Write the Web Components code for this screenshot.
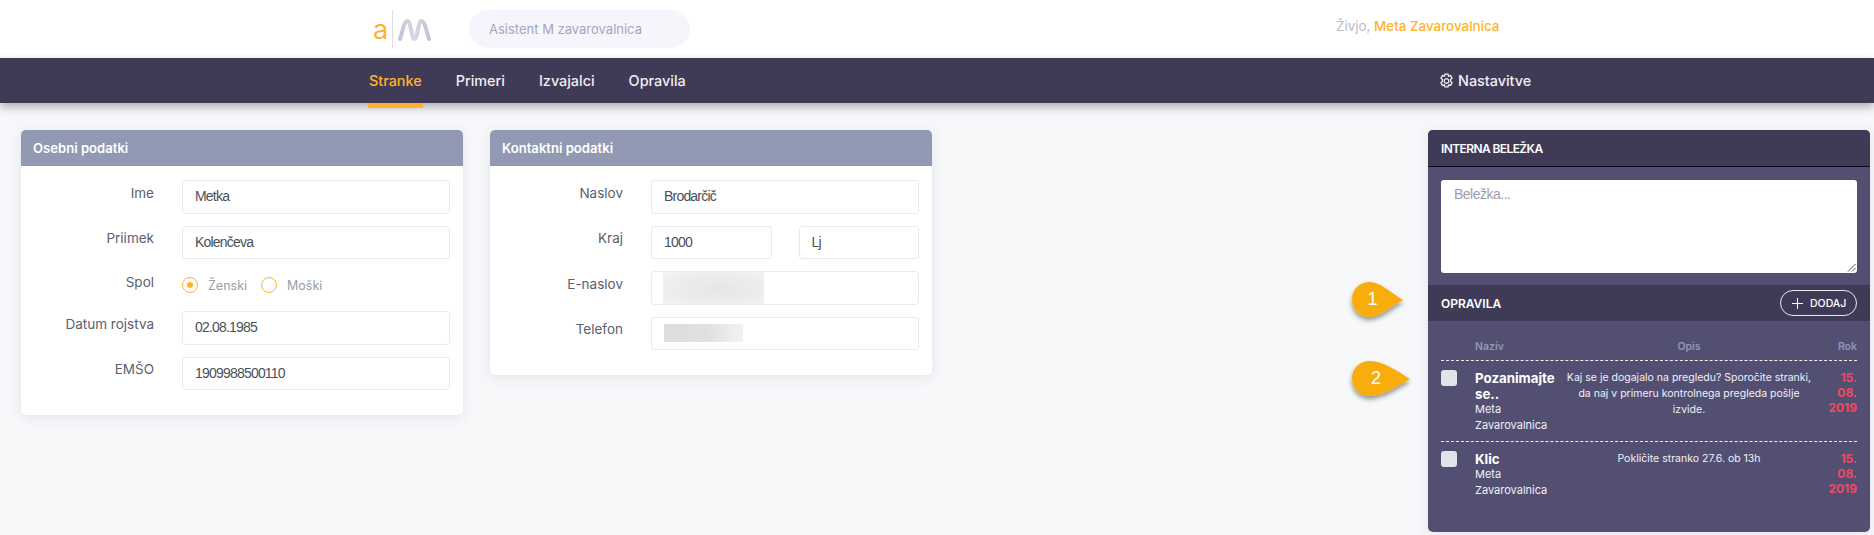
<!DOCTYPE html>
<html lang="sl">
<head>
<meta charset="utf-8">
<title>Stranke</title>
<style>
html, body { margin: 0; height: 100%; }
body {
  background: #f7f8fa;
  font-family: "Inter", "Liberation Sans", sans-serif;
  --dark: #3f3b57;
  --violet: #524f72;
  --orange: #ffb22e;
  overflow: hidden;
}
</style>
</head>
<body>
<top-bar></top-bar>
<main-nav></main-nav>
<page-body>
  <form-card title="Osebni podatki">
    <form-row label="Ime"><text-field>Metka</text-field></form-row>
    <form-row label="Priimek"><text-field>Kolenčeva</text-field></form-row>
    <form-row label="Spol" short>
      <radio-option checked>Ženski</radio-option>
      <radio-option>Moški</radio-option>
    </form-row>
    <form-row label="Datum rojstva"><text-field>02.08.1985</text-field></form-row>
    <form-row label="EMŠO"><text-field>1909988500110</text-field></form-row>
  </form-card>
  <form-card title="Kontaktni podatki">
    <form-row label="Naslov"><text-field>Brodarčič</text-field></form-row>
    <form-row label="Kraj" split><text-field>1000</text-field><text-field>Lj</text-field></form-row>
    <form-row label="E-naslov"><text-field><blur-patch kind="mail"></blur-patch></text-field></form-row>
    <form-row label="Telefon"><text-field><blur-patch kind="phone"></blur-patch></text-field></form-row>
  </form-card>
  <side-panel>
    <task-row name="Pozanimajte se.." owner="Meta Zavarovalnica" date="15. 08. 2019">Kaj se je dogajalo na pregledu? Sporočite stranki, da naj v primeru kontrolnega pregleda pošlje izvide.</task-row>
    <task-row name="Klic" owner="Meta Zavarovalnica" date="15. 08. 2019">Pokličite stranko 27.6. ob 13h</task-row>
  </side-panel>
  <call-out num="1" tip="51" style="left:1352px;top:179px"></call-out>
  <call-out num="2" tip="58" style="left:1352px;top:258px"></call-out>
</page-body>

<script>
function define(name, css, html, init) {
  customElements.define(name, class extends HTMLElement {
    constructor() {
      super();
      this.attachShadow({ mode: "open" }).innerHTML = `<style>${css}</style>${html}`;
    }
    connectedCallback() {
      if (init) init(this, this.shadowRoot);
    }
  });
}

define("top-bar", `
:host { display: flex; align-items: center; height: 58px; background: #fff; padding-left: 369px; box-sizing: border-box; }
.logo { display: flex; align-items: center; width: 100px; height: 38px; }
.a { font: 400 27px "Inter", sans-serif; color: var(--orange); width: 23px; line-height: 38px; padding-left: 4px; box-sizing: border-box; margin-top: 2px; }
.sep { width: 1px; height: 38px; background: #dcdce4; }
svg { margin-left: 4px; margin-top: 2px; }
.search { width: 221px; height: 38px; border-radius: 19px; background: #f5f5fb; color: #a4a7bf; font-size: 13px; line-height: 38px; padding-left: 20px; box-sizing: border-box; }
.hello { position: absolute; left: 1336px; top: 18px; font-size: 13.4px; line-height: 16px; color: #b9bac9; }
.hello b { font-weight: 500; color: var(--orange); }
`, `
<div class="logo">
  <span class="a">a</span><span class="sep"></span>
  <svg width="35" height="24" viewBox="0 0 35 24"><defs><linearGradient id="w" x1="0" x2="1" y1="0" y2="0"><stop offset="0" stop-color="#c4c6d9"/><stop offset=".5" stop-color="#d6d7e4"/><stop offset="1" stop-color="#c4c6d9"/></linearGradient></defs><path d="M3 21C5.5 14 7 3 10.5 3 14 3 14.5 21 17.5 21 20.5 21 21 3 24.5 3 28 3 29.5 14 32 21" fill="none" stroke="url(#w)" stroke-width="4" stroke-linecap="round"/></svg>
</div>
<div class="search">Asistent M zavarovalnica</div>
<div class="hello">Živjo, <b>Meta Zavarovalnica</b></div>
`);

define("main-nav", `
:host { display: flex; position: relative; height: 45px; background: var(--dark); padding-left: 368px; box-shadow: 0 4px 9px rgba(60,60,70,.4); z-index: 1; }
a { display: block; color: #eeeef4; font-size: 14.4px; font-weight: 500; line-height: 45px; padding: 0 1px; margin-right: 32px; position: relative; }
a.on { color: var(--orange); }
a.on::after { content: ""; position: absolute; left: 0; right: 0; top: 45px; height: 5px; background: var(--orange); }
.set { position: absolute; left: 1438px; top: 0; display: flex; align-items: center; gap: 4px; margin: 0; }
`, `
<a class="on">Stranke</a><a>Primeri</a><a>Izvajalci</a><a>Opravila</a>
<a class="set">
  <svg width="15" height="16" viewBox="0 0 14 15" fill="none" stroke="#eeeef4" stroke-width="1.2"><path d="M5.6 1h2.8l.5 2 1.9-.6 1.4 2.4-1.4 1.4v1.6l1.4 1.4-1.4 2.4-1.9-.6-.5 2H5.6l-.5-2-1.9.6-1.4-2.4 1.4-1.4V6.2L1.8 4.8l1.4-2.4 1.9.6z"/><path d="M7 5.2l2 1.15v2.3L7 9.8l-2-1.15v-2.3z"/></svg>
  Nastavitve
</a>
`);

define("page-body", `
:host { display: flex; position: relative; align-items: flex-start; gap: 27px; padding: 27px 4px 0 21px; }
::slotted(side-panel) { margin-left: auto; }
`, `<slot></slot>`);

define("form-card", `
:host { display: block; width: 442px; background: #fff; border-radius: 5px; box-shadow: 0 2px 14px rgba(120,125,150,.16); overflow: hidden; }
h2 { margin: 0; height: 36px; box-sizing: border-box; background: #9299b2; color: #fff; font-size: 13.1px; font-weight: 600; line-height: 36px; padding-left: 12px; }
.rows { display: flex; flex-direction: column; gap: 12px; padding: 14px 13px 25px 0; }
`, `<h2></h2><div class="rows"><slot></slot></div>`, (el, root) => {
  root.querySelector("h2").textContent = el.getAttribute("title");
  el.removeAttribute("title");
});

define("form-row", `
:host { display: grid; grid-template-columns: 133px 1fr; column-gap: 28px; min-height: 33.6px; }
:host([short]) { min-height: 28px; height: 28px; }
.label { text-align: right; color: #5b5e6e; font-size: 13.5px; line-height: 20px; padding-top: 2.5px; }
:host([short]) .label { padding-top: 1px; }
.val { display: flex; min-width: 0; }
:host([short]) .val { align-items: center; gap: 14px; }
:host([split]) .val { gap: 27px; }
`, `<div class="label"></div><div class="val"><slot></slot></div>`, (el, root) => {
  root.querySelector(".label").textContent = el.getAttribute("label");
});

define("text-field", `
:host { display: flex; flex: 1; align-items: center; height: 33.6px; box-sizing: border-box; border: 1px solid #e9e9f1; border-radius: 3px; background: #fff; padding: 0 12px 1px; color: #495057; font: 14px/1 "Liberation Sans", sans-serif; letter-spacing: -.8px; overflow: hidden; min-width: 0; }
`, `<slot></slot>`);

define("blur-patch", `
:host { display: block; }
:host([kind=mail]) { width: 101px; height: 33px; margin: 1px 0 0 -1px; background: radial-gradient(ellipse at 55% 55%, #e6e6e6, #eeeeee 65%, #f6f6f6); }
:host([kind=phone]) { width: 79px; height: 18px; background: linear-gradient(90deg, #dedede, #e0e0e0 55%, #f3f3f3); }
`, ``);

define("radio-option", `
:host { display: flex; align-items: center; gap: 10px; color: #9a9cac; font-size: 12.5px; }
i { display: flex; align-items: center; justify-content: center; width: 16px; height: 16px; box-sizing: border-box; border: 1px solid var(--orange); border-radius: 50%; }
:host([checked]) i::after { content: ""; width: 6px; height: 6px; border-radius: 50%; background: var(--orange); }
`, `<i></i><slot></slot>`);

define("side-panel", `
:host { display: block; width: 442px; height: 402px; background: var(--violet); border-radius: 5px; overflow: hidden; box-shadow: 0 2px 14px rgba(120,125,150,.16); }
.bar { display: flex; align-items: center; justify-content: space-between; height: 36px; background: var(--dark); color: #fff; font-size: 12px; font-weight: 600; padding: 0 13px; box-sizing: border-box; }
.bar.first { border-bottom: 1px solid #0c0b14; height: 37px; letter-spacing: -.6px; }
.note { position: relative; height: 93px; margin: 13px 13px 12px; background: #fff; border-radius: 3px; color: #9b9ea8; font: 14px/1 "Liberation Sans", sans-serif; letter-spacing: -.5px; padding: 7px 13px; box-sizing: border-box; }
.grip { position: absolute; right: 1px; bottom: 1px; }
.add { display: flex; align-items: center; gap: 7px; height: 26px; width: 77px; box-sizing: border-box; border: 1px solid #e8e8ee; border-radius: 13px; font-size: 10.5px; font-weight: 500; padding-left: 11px; }
.tasks { padding: 0 13px; }
.head { display: grid; grid-template-columns: 34px 88px 1fr 42px; height: 39px; align-items: end; color: #9397b3; font-size: 10.5px; font-weight: 600; line-height: 12px; padding-bottom: 7px; box-sizing: border-box; }
.head span:nth-child(3) { text-align: center; }
.head span:nth-child(4) { text-align: right; }
`, `
<div class="bar first">INTERNA BELEŽKA</div>
<div class="note">Beležka...<svg class="grip" width="9" height="9" viewBox="0 0 9 9" stroke="#555" fill="none"><path d="M1 8.5 8.5 1M5 8.5 8.5 5"/></svg></div>
<div class="bar">OPRAVILA<span class="add"><svg width="11" height="11" viewBox="0 0 11 11" stroke="#fff" fill="none"><path d="M5.5 0v11M0 5.5h11"/></svg>DODAJ</span></div>
<div class="tasks">
  <div class="head"><span></span><span>Naziv</span><span>Opis</span><span>Rok</span></div>
  <slot></slot>
</div>
`);

define("task-row", `
:host { display: grid; grid-template-columns: 34px 88px 1fr 42px; border-top: 1px dashed #f1f1f6; padding: 9px 0 8px; color: #f1f1f6; font-size: 11px; line-height: 16px; }
.box { width: 16px; height: 16px; border-radius: 3px; background: #e2e4ec; }
.name { color: #fff; font-size: 13.3px; font-weight: 700; line-height: 16.5px; margin-top: -.5px; }
.owner { margin-top: -1.5px; }
.desc { text-align: center; padding: 0 3px; font-size: 10.5px; margin-top: -.5px; }
.date { justify-self: end; width: 30px; text-align: right; color: #f3485f; font-size: 12px; font-weight: 700; line-height: 15px; margin-top: -.5px; }
`, `
<div class="box"></div>
<div><div class="name"></div><div class="owner"></div></div>
<div class="desc"><slot></slot></div>
<div class="date"></div>
`, (el, root) => {
  root.querySelector(".name").textContent = el.getAttribute("name");
  root.querySelector(".owner").textContent = el.getAttribute("owner");
  root.querySelector(".date").textContent = el.getAttribute("date");
});

define("call-out", `
:host { display: block; position: absolute; width: 60px; height: 40px; }
svg { position: absolute; left: 0; top: 0; overflow: visible; }
span { position: absolute; left: 0; top: 0; height: 35px; text-align: center; color: #fff; font: 18px/35px "Liberation Sans", sans-serif; }
`, `
<svg width="60" height="40" viewBox="0 0 60 40"><defs><filter id="s" x="-20%" y="-20%" width="150%" height="160%"><feDropShadow dx="0" dy="3" stdDeviation="2.4" flood-color="#000" flood-opacity=".42"/></filter></defs><path fill="#f9ad0a" filter="url(#s)"/></svg><span></span>
`, (el, root) => {
  const w = +el.getAttribute("tip");
  root.querySelector("path").setAttribute("d", `M0 17.5C0 7 8 0 18 0 ${w / 2 + 2} 0 ${w - 13} 10 ${w} 18 ${w - 13} 25 ${w / 2 + 2} 35 18 35 8 35 0 28 0 17.5Z`);
  const s = root.querySelector("span");
  s.textContent = el.getAttribute("num");
  s.style.width = (w - 10) + "px";
});
</script>
</body>
</html>
